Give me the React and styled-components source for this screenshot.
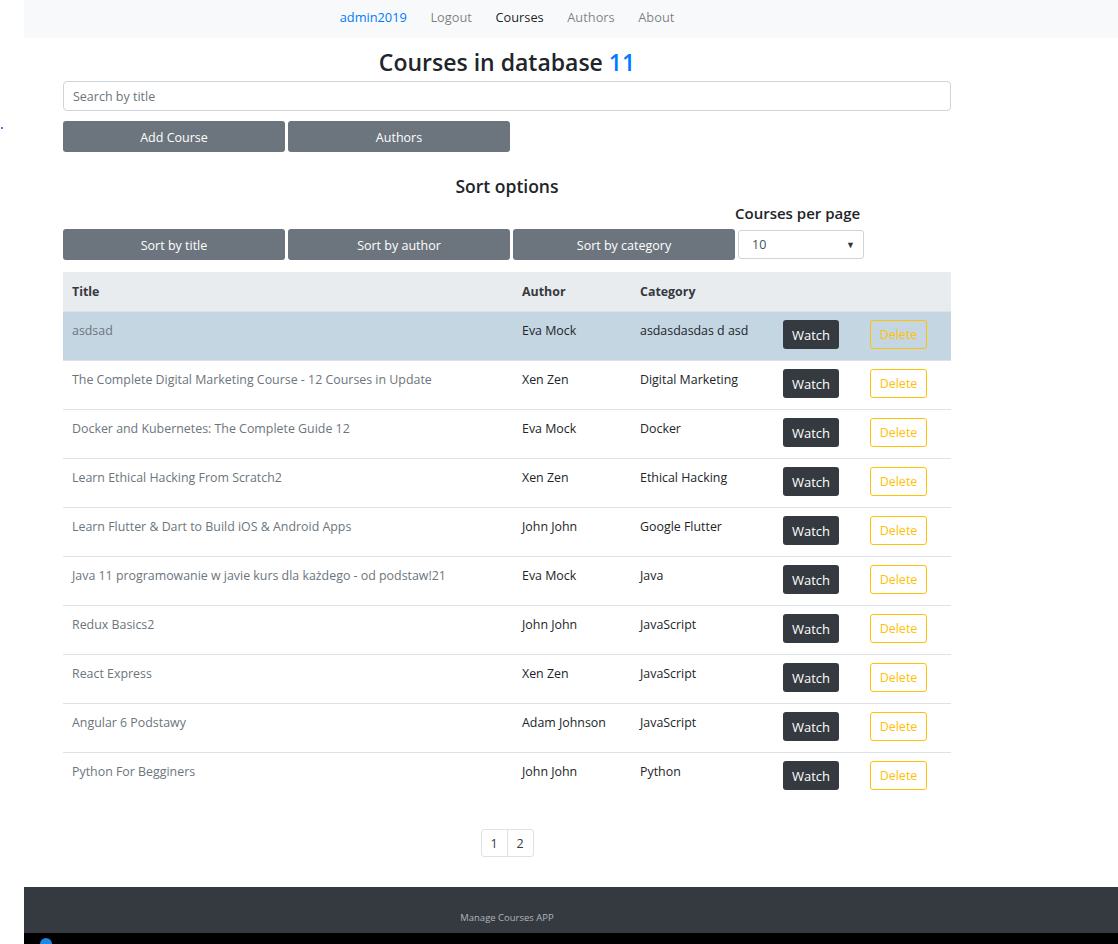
import React from "react";
import styled, { createGlobalStyle } from "styled-components";

const Global = createGlobalStyle`
  html, body { margin: 0; padding: 0; background: #fff; }
  body { font-family: "Open Sans", "Noto Sans", sans-serif; color: #212529; }
  * { box-sizing: border-box; }
`;

const Page = styled.div`
  display: grid;
  grid-template-columns: 24px 1fr;
  width: 1118px;
`;

const Gutter = styled.div`
  padding-top: 127px;
  padding-left: 1px;
`;

const Dot = styled.span`
  display: block;
  width: 2px;
  height: 2px;
  background: #3b3bd0;
  border-radius: 1px;
`;

const Main = styled.div`
  display: flex;
  flex-direction: column;
`;

const NavBar = styled.nav`
  background: #f8f9fa;
  height: 38px;
  padding-left: 39px;
  padding-bottom: 4px;
  display: flex;
  align-items: center;
`;

const NavInner = styled.div`
  width: 888px;
  display: flex;
  justify-content: center;
`;

const NavLink = styled.a`
  font-size: 12.8px;
  padding: 0 11.8px;
  text-decoration: none;
  color: ${(p) =>
    p.$variant === "user" ? "#007bff" : p.$variant === "active" ? "rgba(0,0,0,0.9)" : "rgba(0,0,0,0.5)"};
`;

const Container = styled.div`
  width: 888px;
  margin-left: 39px;
  display: flex;
  flex-direction: column;
`;

const Heading = styled.h1`
  margin: 8px 0 2px;
  height: 33px;
  text-align: center;
  font-size: 23px;
  font-weight: 600;
  line-height: 33px;
  color: #212529;
`;

const Count = styled.span`
  color: #007bff;
`;

const Search = styled.input`
  height: 30px;
  width: 100%;
  border: 1px solid #ced4da;
  border-radius: 4px;
  padding: 1px 9px 0;
  font-family: inherit;
  font-size: 12.5px;
  color: #495057;
  &::placeholder { color: #6c757d; }
`;

const ButtonRow = styled.div`
  display: flex;
  gap: 3px;
  margin-top: ${(p) => p.$mt || 0}px;
  align-items: flex-end;
`;

const GrayButton = styled.button`
  width: 222px;
  height: 31px;
  border: none;
  border-radius: 3px;
  background: #6c757d;
  color: #fff;
  font-family: inherit;
  font-size: 12.5px;
  padding: 1px 0 0;
`;

const SortTitle = styled.h3`
  margin: 22px 0 0;
  text-align: center;
  font-size: 17.5px;
  font-weight: 600;
  line-height: 24px;
`;

const PerPage = styled.div`
  display: flex;
  flex-direction: column;
  gap: 8px;
`;

const PerPageLabel = styled.div`
  font-size: 15px;
  font-weight: 600;
  line-height: 18px;
  margin-left: -3px;
  white-space: nowrap;
`;

const Select = styled.div`
  width: 126px;
  height: 29px;
  border: 1px solid #ced4da;
  border-radius: 3px;
  display: flex;
  align-items: center;
  justify-content: space-between;
  padding: 0 8px 0 13px;
  font-size: 12.5px;
  color: #495057;
  margin-bottom: 1px;
`;

const Caret = styled.span`
  font-size: 9px;
  color: #333;
`;

const Table = styled.table`
  margin-top: 12px;
  width: 888px;
  border-collapse: collapse;
  table-layout: fixed;
  font-size: 12.4px;
`;

const Th = styled.th`
  background: #e9ecef;
  text-align: left;
  font-weight: 700;
  color: #343a40;
  padding: 10px 9px 9px;
  line-height: 20px;
`;

const Tr = styled.tr`
  background: ${(p) => (p.$active ? "#c5d6e3" : "transparent")};
  border-top: 1px solid #dee2e6;
`;

const Td = styled.td`
  vertical-align: top;
  padding: ${(p) => (p.$btn ? "8px 9px 11px" : "9px 9px 10px")};
  line-height: 20px;
  color: ${(p) => (p.$muted ? "#6c757d" : "#212529")};
  white-space: nowrap;
  overflow: hidden;
`;

const WatchButton = styled.button`
  display: block;
  width: 56px;
  height: 29px;
  border: none;
  border-radius: 3px;
  background: #343a40;
  color: #fff;
  font-family: inherit;
  font-size: 13px;
  padding: 0;
`;

const DeleteButton = styled.button`
  display: block;
  width: 57px;
  height: 29px;
  border: 1px solid #ffc107;
  border-radius: 3px;
  background: transparent;
  color: #ffc107;
  font-family: inherit;
  font-size: 12.5px;
  padding: 0;
`;

const Pagination = styled.div`
  display: flex;
  justify-content: center;
  margin-top: 28px;
`;

const PageItem = styled.span`
  width: ${(p) => p.$w}px;
  height: 28px;
  display: flex;
  align-items: center;
  justify-content: center;
  border: 1px solid #dee2e6;
  margin-left: ${(p) => (p.$first ? 0 : -1)}px;
  border-radius: ${(p) => (p.$first ? "3px 0 0 3px" : "0 3px 3px 0")};
  font-size: 12.5px;
  color: #343a40;
`;

const Footer = styled.footer`
  margin-top: 30px;
  height: 46px;
  background: #343a40;
  padding-left: 39px;
  padding-top: 24px;
`;

const FooterText = styled.div`
  width: 888px;
  text-align: center;
  font-size: 9.5px;
  color: #adb5bd;
  line-height: 14px;
`;

const Taskbar = styled.div`
  height: 11px;
  background: #000;
  position: relative;
  overflow: hidden;
`;

const TaskIcon = styled.svg`
  position: absolute;
  left: 15px;
  top: 4px;
`;

const courses = [
  ["asdsad", "Eva Mock", "asdasdasdas d asd"],
  ["The Complete Digital Marketing Course - 12 Courses in Update", "Xen Zen", "Digital Marketing"],
  ["Docker and Kubernetes: The Complete Guide 12", "Eva Mock", "Docker"],
  ["Learn Ethical Hacking From Scratch2", "Xen Zen", "Ethical Hacking"],
  ["Learn Flutter & Dart to Build iOS & Android Apps", "John John", "Google Flutter"],
  ["Java 11 programowanie w javie kurs dla każdego - od podstaw!21", "Eva Mock", "Java"],
  ["Redux Basics2", "John John", "JavaScript"],
  ["React Express", "Xen Zen", "JavaScript"],
  ["Angular 6 Podstawy", "Adam Johnson", "JavaScript"],
  ["Python For Begginers", "John John", "Python"],
];

export default function App() {
  return (
    <>
      <Global />
      <Page>
        <Gutter>
          <Dot />
        </Gutter>
        <Main>
          <NavBar>
            <NavInner>
              <NavLink $variant="user">admin2019</NavLink>
              <NavLink>Logout</NavLink>
              <NavLink $variant="active">Courses</NavLink>
              <NavLink>Authors</NavLink>
              <NavLink>About</NavLink>
            </NavInner>
          </NavBar>
          <Container>
            <Heading>
              Courses in database <Count>11</Count>
            </Heading>
            <Search placeholder="Search by title" />
            <ButtonRow $mt={10}>
              <GrayButton>Add Course</GrayButton>
              <GrayButton>Authors</GrayButton>
            </ButtonRow>
            <SortTitle>Sort options</SortTitle>
            <ButtonRow $mt={6}>
              <GrayButton>Sort by title</GrayButton>
              <GrayButton>Sort by author</GrayButton>
              <GrayButton>Sort by category</GrayButton>
              <PerPage>
                <PerPageLabel>Courses per page</PerPageLabel>
                <Select>
                  <span>10</span>
                  <Caret>▼</Caret>
                </Select>
              </PerPage>
            </ButtonRow>
            <Table>
              <colgroup>
                <col style={{ width: 450 }} />
                <col style={{ width: 118 }} />
                <col style={{ width: 143 }} />
                <col style={{ width: 87 }} />
                <col style={{ width: 90 }} />
              </colgroup>
              <thead>
                <tr>
                  <Th>Title</Th>
                  <Th>Author</Th>
                  <Th>Category</Th>
                  <Th />
                  <Th />
                </tr>
              </thead>
              <tbody>
                {courses.map(([t, a, c], i) => (
                  <Tr key={t} $active={i === 0}>
                    <Td $muted>{t}</Td>
                    <Td>{a}</Td>
                    <Td>{c}</Td>
                    <Td $btn>
                      <WatchButton>Watch</WatchButton>
                    </Td>
                    <Td $btn>
                      <DeleteButton>Delete</DeleteButton>
                    </Td>
                  </Tr>
                ))}
              </tbody>
            </Table>
            <Pagination>
              <PageItem $first $w={27}>1</PageItem>
              <PageItem $w={27}>2</PageItem>
            </Pagination>
          </Container>
          <Footer>
            <FooterText>Manage Courses APP</FooterText>
          </Footer>
          <Taskbar>
            <TaskIcon width="14" height="14" viewBox="0 0 14 14">
              <circle cx="7" cy="7" r="6" fill="#1e88e5" />
            </TaskIcon>
          </Taskbar>
        </Main>
      </Page>
    </>
  );
}
